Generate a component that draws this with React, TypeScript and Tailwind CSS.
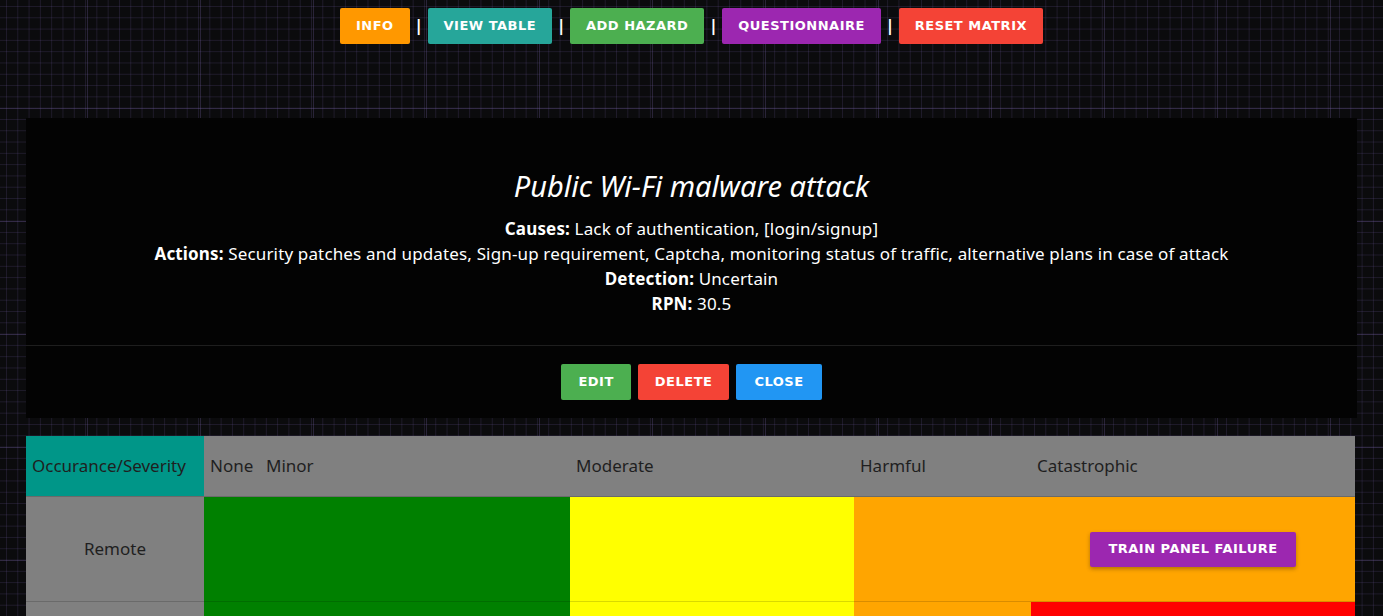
import React from "react";

const navButtons = [
  { label: "Info", color: "bg-[#ff9800]" },
  { label: "View Table", color: "bg-[#26a69a]" },
  { label: "Add Hazard", color: "bg-[#4caf50]" },
  { label: "Questionnaire", color: "bg-[#9c27b0]" },
  { label: "Reset Matrix", color: "bg-[#f44336]" },
];

const btnFont = "font-['DejaVu_Sans',sans-serif] font-bold text-[13px] uppercase tracking-[0.5px] text-white";

function NavButton({ label, color }: { label: string; color: string }) {
  return (
    <button className={`h-9 rounded-[2px] px-4 ${color} ${btnFont}`}>
      {label}
    </button>
  );
}

function Field({ name, value }: { name: string; value: string }) {
  return (
    <p className="leading-[25px]">
      <span className="font-bold">{name}:</span> {value}
    </p>
  );
}

const heads = ["None", "Minor", "Moderate", "Harmful", "Catastrophic"];

const rows = [
  {
    label: "Remote",
    cells: ["bg-[#008000]", "bg-[#008000]", "bg-[#ffff00]", "bg-[#ffa500]", "bg-[#ffa500]"],
    hazard: { col: 4, name: "Train Panel Failure" },
  },
  {
    label: "",
    cells: ["bg-[#008000]", "bg-[#008000]", "bg-[#ffff00]", "bg-[#ffa500]", "bg-[#ff0000]"],
  },
];

export default function App() {
  return (
    <div className="min-h-screen bg-[#0b0b0d] bg-[linear-gradient(rgba(120,100,170,0.28)_1px,transparent_1px),linear-gradient(90deg,rgba(120,100,170,0.28)_1px,transparent_1px),linear-gradient(rgba(110,90,160,0.2)_1px,transparent_1px),linear-gradient(90deg,rgba(110,90,160,0.2)_1px,transparent_1px)] bg-[size:113px_113px,113px_113px,11.3px_11.3px,11.3px_11.3px] bg-[position:87px_108px,87px_108px,6px_6px,6px_6px] font-['Noto_Sans',sans-serif] pb-10">
      <nav className="flex items-center justify-center pt-2">
        {navButtons.map((b, i) => (
          <React.Fragment key={b.label}>
            {i > 0 && (
              <span className="mx-[6px] font-['DejaVu_Sans',sans-serif] text-[16px] font-bold text-white">|</span>
            )}
            <NavButton {...b} />
          </React.Fragment>
        ))}
      </nav>

      <section className="mx-[26px] mt-[74px] bg-[#030303] text-white">
        <div className="flex flex-col items-center px-6 pt-[50px] pb-[29px] text-center text-[17px] tracking-[0.15px]">
          <h4 className="mb-[12px] text-[29px] leading-9 tracking-normal italic">Public Wi-Fi malware attack</h4>
          <Field name="Causes" value="Lack of authentication, [login/signup]" />
          <Field
            name="Actions"
            value="Security patches and updates, Sign-up requirement, Captcha, monitoring status of traffic, alternative plans in case of attack"
          />
          <Field name="Detection" value="Uncertain" />
          <Field name="RPN" value="30.5" />
        </div>
        <div className="flex justify-center gap-[7px] border-t border-[#1e1e1e] py-[18px]">
          <button className={`h-9 rounded-[2px] bg-[#4caf50] px-[17px] ${btnFont}`}>Edit</button>
          <button className={`h-9 rounded-[2px] bg-[#f44336] px-[17px] ${btnFont}`}>Delete</button>
          <button className={`h-9 rounded-[2px] bg-[#2196f3] px-[18px] ${btnFont}`}>Close</button>
        </div>
      </section>

      <div className="mx-[26px] mt-[18px] grid grid-cols-[178px_56px_310px_284px_177px_324px] text-[17px] text-[#1f1f1f]">
        <div className="flex h-[61px] items-center border-b border-[#6a6a6a] bg-[#009688] px-[6px]">
          Occurance/Severity
        </div>
        {heads.map((h) => (
          <div key={h} className="flex h-[61px] items-center border-b border-[#6a6a6a] bg-[#808080] px-[6px]">
            {h}
          </div>
        ))}
        {rows.map((r, ri) => (
          <React.Fragment key={ri}>
            <div className="flex h-[105px] items-center justify-center border-b border-[#6a6a6a] bg-[#808080]">
              {r.label}
            </div>
            {r.cells.map((c, i) => (
              <div key={i} className={`flex h-[105px] items-center justify-center border-b border-black/15 ${c}`}>
                {r.hazard && r.hazard.col === i && (
                  <button className={`h-[35px] rounded-[2px] bg-[#9c27b0] px-[18px] shadow-[0_2px_4px_rgba(0,0,0,0.3)] ${btnFont}`}>
                    {r.hazard.name}
                  </button>
                )}
              </div>
            ))}
          </React.Fragment>
        ))}
      </div>
    </div>
  );
}
